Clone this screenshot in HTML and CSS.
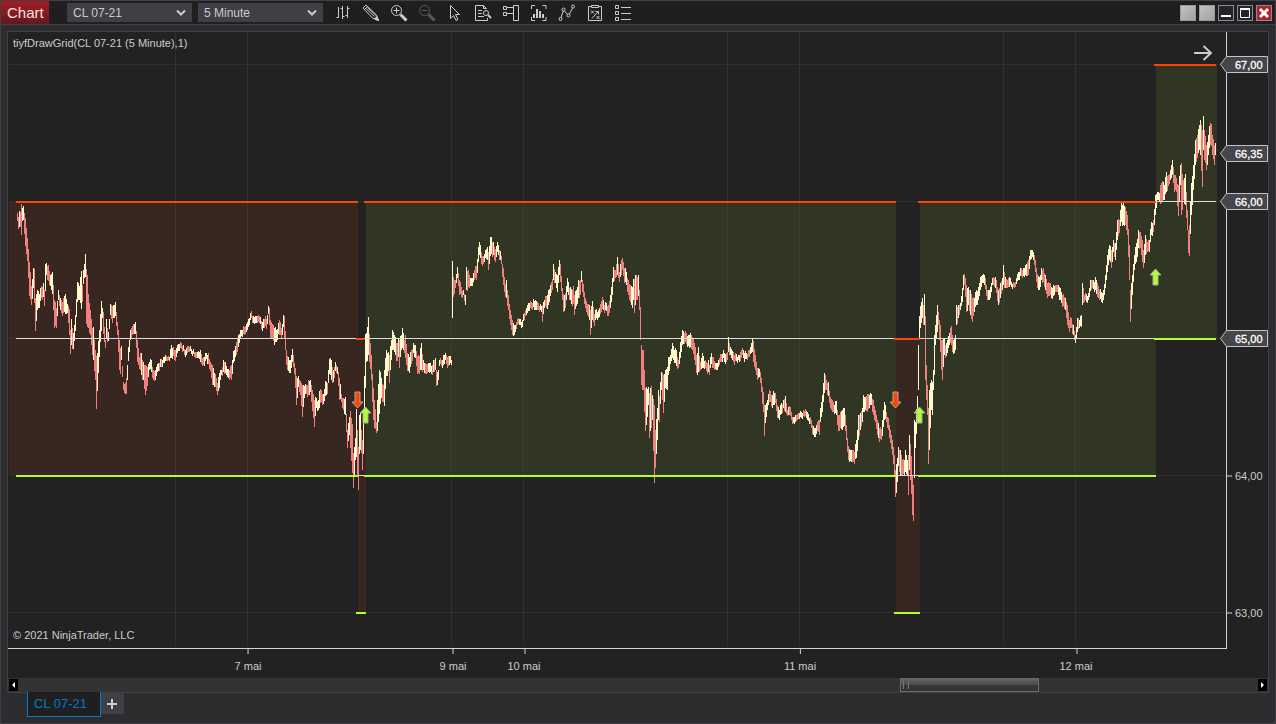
FILE: index.html
```html
<!DOCTYPE html>
<html lang="en">
<head>
    <meta charset="UTF-8">
    <meta name="viewport" content="width=device-width, initial-scale=1.0">
    <title>Chart - CL 07-21</title>
    <link rel="stylesheet" href="styles.css">
</head>
<body>
    <div class="window">
        <header class="titlebar">
            <h1 class="brand">Chart</h1>
            <div class="selectors">
                <div class="picker">
                    <select aria-label="Instrument"><option>CL 07-21</option></select>
                    <svg width="10" height="8" viewBox="0 0 10 8"><path d="M1 1.500l4 4 4-4"/></svg>
                </div>
                <div class="picker">
                    <select aria-label="Interval"><option>5 Minute</option></select>
                    <svg width="10" height="8" viewBox="0 0 10 8"><path d="M1 1.500l4 4 4-4"/></svg>
                </div>
            </div>
            <nav class="tools">
                <button aria-label="Bar style">
                    <svg viewBox="0 0 18 18"><path d="M4.500 3v11M2.500 13.500h2M8.500 2v13M6.500 4.500h2M8.500 12.500h2M13.500 2v12M11.500 11.500h2M13.500 4.500h2"/></svg>
                </button>
                <button aria-label="Drawing tools">
                    <svg viewBox="0 0 18 18"><path d="M1 4l3-3L14 10.500 16.500 16.500 10.500 14z"/><path d="M2.500 5.500l3-3"/><path d="M4 4.500l8.500 8M5.500 3.500l8.500 8"/><path class="solid" d="M12.500 15l4 1.500-1.500-4z"/></svg>
                </button>
                <button aria-label="Zoom in">
                    <svg viewBox="0 0 18 18"><circle cx="6.500" cy="6.500" r="5"/><path d="M3.500 6.500h6M6.500 3.500v6"/><path class="thick" d="M10.500 10.500l6 6"/></svg>
                </button>
                <button aria-label="Zoom out" disabled>
                    <svg viewBox="0 0 18 18"><circle cx="6.500" cy="6.500" r="5"/><path d="M3.500 6.500h6"/><path class="thick" d="M10.500 10.500l6 6"/></svg>
                </button>
                <button aria-label="Cursor">
                    <svg viewBox="0 0 18 18"><path d="M4.500 1.500v13l3-3 2.500 5 2-1-2.500-5h4z"/></svg>
                </button>
                <button aria-label="Data box">
                    <svg viewBox="0 0 18 18"><path d="M13.500 14v2.500h-12v-15h8l3 3M9.500 1.500v3h3M4 6.500h4M4 9.500h4M4 12.500h6"/><circle cx="12" cy="9" r="2.500"/><path class="wide" d="M14 11l3 3"/></svg>
                </button>
                <button aria-label="Chart trader">
                    <svg viewBox="0 0 18 18"><path d="M1.500 2.500h3v3h-3zM1.500 8.500h3v3h-3zM4.500 3.500h7M4.500 9.500h7M11.500 1.500h5v15h-5z"/></svg>
                </button>
                <button aria-label="Data series">
                    <svg viewBox="0 0 18 18"><path d="M1.500 5V1.500H5M12.500 1.500h3.500V5M1.500 13v3.500H5M12.500 16.500h3.500V13"/><path class="wide" d="M4 14v-4M7 14V5M10 14V7M13 14v-4"/></svg>
                </button>
                <button aria-label="Indicators">
                    <svg viewBox="0 0 18 18"><path d="M2.500 15l3-9 5 5.500 5-9"/><circle class="dot" cx="2.500" cy="15" r="1.500"/><circle class="dot" cx="5.500" cy="5.500" r="1.500"/><circle class="dot" cx="10.500" cy="11.500" r="1.500"/><circle class="dot" cx="15" cy="2.500" r="1.500"/></svg>
                </button>
                <button aria-label="Strategies">
                    <svg viewBox="0 0 18 18"><path d="M5.500 2.500h-3v14h13v-14h-3M5.500 1.500h7v2h-7zM5 6.500l3 3M8 6.500l-3 3M6 14.500l6-7M9.500 7.500h3v3M10.500 12l3 3M13.500 12l-3 3"/></svg>
                </button>
                <button aria-label="Properties">
                    <svg viewBox="0 0 18 18"><path d="M1.500 1.500h3v3h-3zM1.500 7.500h3v3h-3zM1.500 13.500h3v3h-3zM7 3.500h10M7 9.500h10M7 15.500h10"/></svg>
                </button>
            </nav>
            <div class="window-buttons">
                <button class="blank" aria-label="Instrument link"></button>
                <button class="blank" aria-label="Interval link"></button>
                <button aria-label="Minimize"><svg viewBox="0 0 14 14"><path class="bar" d="M2 10h10"/></svg></button>
                <button aria-label="Maximize"><svg viewBox="0 0 14 14"><path d="M2.500 3v8.500h9V3"/><path class="bar" d="M2 3h10"/></svg></button>
                <button class="close" aria-label="Close"><svg viewBox="0 0 14 14"><path class="cross" d="M3 3l8 8M11 3l-8 8"/></svg></button>
            </div>
        </header>

        <main class="workspace">
            <section class="panel">
                <div class="chart">
                    <div class="plot">
                        <svg class="canvas" id="canvas" viewBox="8 32 1218 616" preserveAspectRatio="none"></svg>
                        <p class="caption">tiyfDrawGrid(CL 07-21 (5 Minute),1)</p>
                        <p class="copyright">© 2021 NinjaTrader, LLC</p>
                        <button class="go-latest" aria-label="Go to latest bar">
                            <svg width="20" height="18" viewBox="0 0 20 18"><path d="M1 9h17M10.500 2l7.500 7-7.500 7"/></svg>
                        </button>
                    </div>
                    <div class="price-axis" id="priceAxis"></div>
                    <div class="time-axis" id="timeAxis"></div>
                </div>
                <div class="scrollbar">
                    <button aria-label="Scroll left"><svg width="5" height="6" viewBox="0 0 5 6"><path d="M4 0v6L1 3z"/></svg></button>
                    <div class="track"><div class="thumb"></div></div>
                    <button aria-label="Scroll right"><svg width="5" height="6" viewBox="0 0 5 6"><path d="M1 0v6l3-3z"/></svg></button>
                </div>
            </section>
        </main>

        <footer class="tabs">
            <button class="tab">CL 07-21</button>
            <button class="add-tab" aria-label="Add tab"><svg width="10" height="10" viewBox="0 0 10 10"><path d="M0 5h10M5 0v10"/></svg></button>
        </footer>
    </div>
    <script src="chart.js"></script>
</body>
</html>
```
FILE: styles.css
```css
* {
    margin: 0;
    padding: 0;
    box-sizing: border-box;
    font-family: "Liberation Sans", Arial, sans-serif;
}

body {
    background: #2d2d30;
    color: #cccccc;
    font-size: 11px;
}

button {
    border: none;
    background: none;
    color: inherit;
    cursor: pointer;
}

svg {
    display: block;
    fill: none;
    stroke: currentColor;
}

.window {
    display: flex;
    flex-direction: column;
    height: 100vh;
    border: 1px solid #3f3f46;
}

/* Title bar */
.titlebar {
    display: flex;
    align-items: center;
    height: 24px;
    background: #1f1f1f;
    border-bottom: 1px solid #3f3f46;
}

.brand {
    width: 48px;
    height: 23px;
    padding-left: 6px;
    background: linear-gradient(#a51e25, #64181c);
    color: #f0e4e4;
    font-size: 15px;
    font-weight: normal;
    line-height: 23px;
}

.selectors {
    display: flex;
    gap: 6px;
    margin-left: 18px;
}

.picker {
    position: relative;
    width: 125px;
}

.picker select {
    appearance: none;
    display: block;
    width: 100%;
    height: 19px;
    padding-left: 6px;
    background: #3f3f46;
    border: none;
    color: #cccccc;
    font-size: 12px;
}

.picker svg {
    position: absolute;
    top: 6px;
    right: 6px;
    stroke-width: 2;
    pointer-events: none;
}

.tools {
    display: flex;
    margin-left: 6px;
}

.tools button {
    display: flex;
    align-items: center;
    justify-content: center;
    width: 28px;
    height: 23px;
}

.tools button:disabled {
    color: #5a5a5a;
}

.tools svg {
    width: 18px;
    height: 18px;
}

.tools .thick {
    stroke-width: 3;
}

.tools .wide {
    stroke-width: 2;
}

.tools .solid {
    fill: currentColor;
}

.tools .dot {
    fill: #1f1f1f;
}

.window-buttons {
    display: flex;
    gap: 3px;
    margin-left: auto;
    margin-right: 3px;
}

.window-buttons button {
    width: 16px;
    height: 16px;
    border: 1px solid #8c8c8c;
    background: #26232a;
    color: #ffffff;
}

.window-buttons .blank {
    background: linear-gradient(135deg, #c4c0c2, #a5a1a3);
    border-color: #9a9a9a;
}

.window-buttons .close {
    background: #b3202c;
}

.window-buttons .bar {
    stroke-width: 2;
}

.window-buttons .cross {
    stroke-width: 3;
}

/* Chart panel */
.workspace {
    display: flex;
    flex: 1;
    min-height: 0;
    padding: 6px 6px 0;
}

.panel {
    display: flex;
    flex: 1;
    flex-direction: column;
    min-width: 0;
    background: #222222;
    border: 1px solid #3f3f46;
}

.chart {
    display: grid;
    flex: 1;
    grid-template-columns: minmax(0, 1fr) 41px;
    grid-template-rows: minmax(0, 1fr) 29px;
    min-height: 0;
}

.plot {
    position: relative;
    border-right: 1px solid #d3d3d3;
    border-bottom: 1px solid #d3d3d3;
}

.canvas {
    width: 100%;
    height: 100%;
    stroke: none;
    shape-rendering: crispEdges;
}

.caption {
    position: absolute;
    top: 5px;
    left: 5px;
}

.copyright {
    position: absolute;
    bottom: 7px;
    left: 5px;
}

.go-latest {
    position: absolute;
    top: 12px;
    right: 13px;
}

.go-latest svg {
    stroke-width: 2;
}

.zone-down {
    fill: #382620;
}

.zone-up {
    fill: #303623;
}

.grid-line {
    fill: rgba(255, 255, 255, 0.06);
}

.level-top {
    fill: #ff4500;
}

.level-bottom {
    fill: #adff2f;
}

.level-mid {
    fill: #dcdcdc;
}

.bar-up {
    fill: #fffacd;
}

.bar-down {
    fill: #f08080;
}

.arrow {
    stroke: #a9a9a9;
    shape-rendering: auto;
}

/* Axes */
.price-axis,
.time-axis {
    position: relative;
}

.price-label {
    position: absolute;
    left: 0;
    padding-left: 8px;
    line-height: 17px;
    transform: translateY(-50%);
}

.price-label::before {
    content: "";
    position: absolute;
    top: 8px;
    left: 0;
    width: 5px;
    height: 1px;
    background: #d3d3d3;
}

.price-tag {
    position: absolute;
    left: -7px;
    width: 48px;
    height: 18px;
    transform: translateY(-50%);
}

.price-tag svg {
    fill: #45454b;
    stroke: #c4c4c4;
}

.price-tag span {
    position: absolute;
    top: 2px;
    left: 15px;
    color: #ffffff;
    line-height: 14px;
    -webkit-text-stroke: 0.3px #ffffff;
}

.time-label {
    position: absolute;
    top: 0;
    padding-top: 11px;
    white-space: nowrap;
    transform: translateX(-50%);
}

.time-label::before {
    content: "";
    position: absolute;
    top: 0;
    left: 50%;
    width: 1px;
    height: 5px;
    background: #d3d3d3;
}

/* Scrollbar */
.scrollbar {
    display: flex;
    align-items: center;
    height: 14px;
    padding: 0 1px;
    background: #333333;
}

.scrollbar button {
    display: flex;
    align-items: center;
    justify-content: center;
    width: 9px;
    height: 12px;
    background: #000000;
}

.scrollbar svg {
    fill: #ffffff;
    stroke: none;
}

.track {
    flex: 1;
    height: 14px;
}

.thumb {
    width: 11.2%;
    height: 14px;
    margin-left: 71.1%;
    border: 1px solid #6a6a6a;
    background: linear-gradient(#646464, #4a4a4a 50%, #383838 50%, #333333);
}

.thumb::before {
    content: "";
    display: block;
    width: 4px;
    height: 8px;
    margin: 2px;
    border: solid #777777;
    border-width: 0 1px;
}

/* Workspace tabs */
.tabs {
    display: flex;
    align-items: flex-start;
    height: 30px;
    padding-left: 26px;
}

.tab {
    height: 25px;
    width: 74px;
    margin-top: -1px;
    padding: 0 7px 2px 0;
    background: #1f1f1f;
    border: 1px solid #007acc;
    border-top: none;
    color: #007acc;
    font-size: 13px;
}

.add-tab {
    display: flex;
    align-items: center;
    justify-content: center;
    width: 23px;
    height: 21px;
    padding-right: 1px;
    background: #3f3f46;
}

.add-tab svg {
    stroke-width: 2;
}
```
FILE: chart.js
```js
const svg = document.getElementById('canvas');

// Plot area, in canvas units
const plot = { left: 8, top: 32, width: 1218, height: 616 };

// x, high, low of the price bars; the bars between two entries are interpolated
const bars = [
    17,213,221, 18,217,229, 19,211,227, 20,212,227, 21,204,235, 22,208,221, 23,206,220, 25,218,246, 27,238,261, 29,262,296, 31,286,305, 33,268,288,
    34,269,303, 35,298,331, 37,290,310, 39,294,308, 41,286,298, 43,283,297, 44,290,306, 45,264,291, 46,263,275, 48,265,281, 50,275,286,
    52,272,294, 54,300,328, 56,308,328, 58,290,300, 60,298,310, 62,302,316, 64,296,312, 65,294,314, 67,304,313, 69,309,335,
    70,330,354, 71,319,345, 73,333,349, 75,315,331, 77,282,302, 79,286,300, 81,271,309, 82,285,302, 83,270,284, 84,264,278, 85,254,277,
    86,269,324, 87,275,327, 88,294,328, 90,310,335, 92,328,355, 93,327,360, 95,350,380, 96,356,409, 97,353,391, 99,330,357, 101,301,331,
    102,308,318, 103,312,334, 105,340,348, 106,319,338, 108,332,341, 110,304,315, 112,306,323, 113,305,318, 115,302,316, 117,322,335,
    119,340,370, 120,348,374, 121,346,360, 123,382,390, 125,383,394, 126,378,394, 128,347,361, 130,330,340, 132,326,335, 134,324,334,
    135,322,334, 137,340,362, 139,357,369, 141,353,375, 143,362,380, 145,365,395, 147,367,386, 149,362,370, 151,360,372, 153,370,380,
    155,370,380, 157,364,372, 159,363,371, 161,359,367, 163,357,363, 165,355,361, 167,357,361, 169,357,361, 171,345,358, 173,347,356,
    175,350,361, 177,345,353, 179,344,351, 181,343,349, 183,345,351, 185,350,357, 187,346,353, 189,347,352, 191,349,354, 193,349,354,
    195,352,358, 197,352,358, 199,352,359, 200,350,362, 202,358,366, 204,357,366, 206,353,359, 208,353,364, 210,362,371, 212,365,385,
    214,373,387, 216,378,391, 217,383,395, 219,373,388, 221,370,375, 223,360,372, 225,362,373, 227,369,377, 229,370,380, 231,365,380,
    233,351,363, 235,346,357, 237,338,352, 239,334,343, 241,330,336, 243,326,334, 245,326,334, 247,322,330, 249,318,325, 251,311,318,
    253,316,323, 255,316,323, 257,316,323, 259,316,323, 261,321,329, 263,319,328, 265,316,326, 266,319,329, 268,306,314, 269,308,325,
    270,320,338, 272,324,338, 274,328,345, 276,330,342, 278,323,334, 279,320,335, 281,328,338, 283,315,327, 284,316,338, 286,350,365,
    288,357,371, 290,360,373, 292,349,362, 294,363,374, 296,376,405, 298,376,387, 300,381,395, 302,385,417, 304,386,398, 306,385,394,
    308,380,395, 310,380,392, 312,390,411, 314,400,427, 316,398,408, 318,400,410, 319,391,408, 321,390,402, 323,394,404, 325,381,396,
    327,383,394, 329,359,374, 331,360,380, 333,370,382, 335,362,371, 337,367,374, 339,378,400, 341,394,402, 343,398,410, 345,397,415,
    347,430,448, 349,417,435, 350,411,448, 352,424,473, 353,453,488, 355,438,460, 356,409,457, 357,430,475, 358,447,490, 359,415,454,
    360,413,450, 361,430,453, 362,440,470, 363,415,454, 364,376,420, 365,334,388, 366,333,362, 368,317,355, 369,334,362, 371,355,380,
    373,388,420, 374,400,428, 376,422,433, 377,400,431, 379,370,414, 381,378,398, 383,385,402, 384,370,406, 386,350,376, 388,352,371,
    389,355,383, 391,340,360, 392,330,350, 394,335,352, 396,343,361, 398,338,357, 399,340,368, 401,335,350, 402,328,348, 404,340,353,
    405,335,358, 407,353,371, 409,357,373, 411,350,364, 413,343,353, 415,345,358, 417,356,374, 419,356,374, 421,343,370, 423,360,370,
    425,363,374, 427,364,373, 429,363,373, 431,366,374, 433,360,372, 435,358,370, 436,370,386, 438,370,380, 439,360,366, 441,360,366,
    443,355,365, 445,353,360, 447,357,368, 449,356,365, 451,360,365, 452,261,318, 453,277,297, 455,280,288, 457,267,278, 459,280,295,
    461,287,297, 463,290,295, 465,295,305, 466,267,290, 468,270,287, 470,278,286, 472,278,286, 474,270,280, 476,266,280, 478,247,262,
    479,242,255, 481,252,264, 483,256,264, 485,250,258, 487,247,260, 488,252,270, 490,237,256, 491,237,254, 493,242,255, 495,249,262,
    497,242,252, 499,250,260, 501,256,264, 503,268,285, 505,284,297, 506,280,298, 508,295,310, 510,310,325, 512,320,335, 513,323,336,
    515,325,332, 517,319,325, 519,319,325, 521,322,328, 523,314,321, 525,310,316, 527,305,313, 529,303,311, 531,302,309, 533,299,307,
    535,300,310, 537,302,310, 539,306,312, 541,306,312, 542,305,322, 544,300,308, 546,296,308, 548,290,305, 550,285,296, 552,279,290,
    553,264,280, 555,272,283, 557,275,292, 559,260,275, 560,264,282, 562,288,300, 563,294,312, 565,293,308, 567,278,292, 569,288,300,
    571,289,304, 573,286,304, 574,295,315, 576,290,306, 578,280,298, 580,280,295, 581,271,282, 583,284,297, 585,298,308, 587,304,315,
    589,305,320, 590,310,335, 592,301,320, 594,314,326, 596,309,318, 598,310,318, 600,304,314, 602,297,309, 604,305,313, 606,303,311,
    608,305,316, 610,295,308, 612,278,295, 613,267,282, 615,270,278, 617,257,275, 619,272,282, 621,260,275, 622,258,270, 624,268,283,
    626,272,285, 628,280,295, 630,285,302, 632,287,308, 633,279,300, 634,279,313, 636,275,300, 638,275,296, 639,290,310, 640,307,340,
    641,345,385, 643,350,390, 645,388,431, 646,387,425, 648,387,405, 649,393,438, 651,386,428, 652,395,420, 654,405,483, 655,430,468,
    657,408,440, 658,390,420, 659,396,422, 661,372,390, 662,373,400, 663,375,413, 665,370,388, 667,367,390, 668,357,375, 670,355,364,
    672,343,358, 674,350,363, 676,350,366, 678,360,368, 680,342,358, 682,330,345, 684,333,344, 686,333,344, 688,335,346, 690,333,347,
    692,337,350, 694,343,360, 696,355,373, 698,347,372, 700,362,370, 702,353,368, 704,361,369, 706,362,371, 708,360,372, 709,365,375,
    711,353,364, 713,357,368, 715,363,369, 717,363,370, 719,358,365, 721,354,362, 723,350,358, 725,354,364, 727,352,360, 728,337,352,
    730,347,355, 732,351,360, 734,355,365, 736,354,361, 738,355,360, 740,352,361, 742,348,355, 744,353,362, 746,353,359, 748,350,357,
    750,347,354, 752,339,352, 753,341,362, 755,355,370, 757,368,380, 759,369,377, 761,378,392, 763,392,412, 764,405,436, 765,405,423,
    767,400,410, 769,390,402, 771,395,406, 773,391,405, 775,393,403, 777,405,418, 779,410,420, 781,403,414, 783,400,408, 785,396,412,
    787,410,416, 789,406,415, 791,412,420, 793,417,423, 795,415,422, 797,414,420, 799,413,419, 801,412,418, 803,410,416, 805,409,416,
    807,412,420, 809,418,424, 811,420,428, 813,426,435, 815,428,437, 817,422,431, 819,420,435, 820,408,422, 822,395,412, 824,373,393,
    826,380,390, 828,382,396, 830,397,408, 832,400,412, 834,405,414, 836,401,415, 838,415,431, 840,412,428, 842,410,430, 844,408,426,
    846,425,440, 848,446,460, 850,450,461, 852,450,462, 854,452,464, 856,440,458, 858,415,440, 860,413,430, 862,408,422, 863,395,412,
    865,397,410, 867,394,412, 869,395,408, 871,394,405, 873,400,415, 875,410,422, 877,420,435, 879,428,442, 881,429,440, 882,420,436,
    884,402,420, 886,412,422, 888,418,430, 890,430,443, 892,440,455, 894,455,475, 895,470,497, 896,464,493, 898,447,466, 900,450,475,
    902,460,475, 904,460,475, 905,450,472, 907,460,475, 908,455,495, 909,435,470, 911,456,494, 912,475,515, 913,485,521, 914,420,478,
    915,422,448, 917,396,420, 918,345,390, 919,316,340, 920,306,328, 922,298,318, 923,305,325, 924,294,325, 925,316,380, 926,365,400,
    927,385,415, 928,408,464, 929,390,450, 931,380,410, 932,382,415, 933,370,390, 934,335,375, 935,325,345, 937,305,332, 938,312,325,
    940,325,352, 941,340,370, 942,340,380, 944,338,355, 945,345,358, 947,340,353, 949,333,345, 951,326,345, 953,340,354, 955,335,350,
    956,305,325, 958,305,318, 960,303,310, 962,288,302, 963,275,290, 964,274,285, 966,285,312, 968,287,305, 970,290,315, 972,298,322,
    974,298,312, 976,290,305, 978,287,300, 980,277,290, 982,275,283, 984,275,285, 986,285,296, 988,290,300, 990,287,298, 992,278,285,
    994,278,287, 996,280,293, 998,290,305, 1000,283,298, 1002,278,290, 1003,265,285, 1005,277,288, 1007,280,288, 1009,277,287,
    1011,282,287, 1013,282,287, 1015,282,287, 1017,274,281, 1019,272,280, 1021,268,276, 1023,268,276, 1025,265,275, 1027,262,276,
    1028,260,275, 1030,250,260, 1032,250,257, 1034,255,265, 1036,268,282, 1038,276,290, 1040,275,287, 1041,268,280, 1043,268,282,
    1045,275,290, 1047,283,298, 1049,283,296, 1051,287,298, 1053,285,296, 1055,285,292, 1057,285,292, 1059,287,300, 1061,292,303,
    1063,294,306, 1065,298,310, 1067,305,325, 1069,320,332, 1071,318,328, 1073,325,335, 1075,335,343, 1077,318,332, 1079,320,328,
    1081,315,327, 1082,283,305, 1084,295,302, 1086,294,302, 1088,293,300, 1090,280,291, 1092,280,288, 1094,282,292, 1095,277,290,
    1097,283,297, 1099,290,300, 1101,292,302, 1103,290,300, 1105,275,288, 1107,255,272, 1109,245,260, 1111,250,268, 1113,240,252,
    1115,243,260, 1117,220,240, 1119,220,233, 1121,203,222, 1123,203,225, 1125,207,225, 1127,215,235, 1129,245,280, 1130,290,322,
    1132,275,295, 1134,255,270, 1136,243,262, 1138,230,248, 1140,232,248, 1142,240,262, 1143,250,268, 1145,235,255, 1147,242,252,
    1149,240,252, 1151,222,235, 1153,220,232, 1155,195,215, 1157,192,200, 1159,193,202, 1160,185,204, 1162,181,202, 1164,185,200,
    1166,172,192, 1168,175,186, 1170,170,180, 1172,160,175, 1174,175,192, 1176,178,192, 1178,185,216, 1180,165,185, 1181,163,215,
    1183,180,200, 1185,174,205, 1187,210,230, 1188,230,253, 1189,225,256, 1191,183,215, 1193,165,190, 1195,140,165, 1197,135,158,
    1199,125,150, 1200,120,155, 1202,130,187, 1203,116,150, 1204,130,160, 1206,145,170, 1208,135,155, 1209,126,148, 1211,124,146,
    1212,135,155, 1214,145,165, 1215,143,155
];

function add(tag, attrs) {
    const el = document.createElementNS('http://www.w3.org/2000/svg', tag);
    for (const key in attrs) {
        el.setAttribute(key, attrs[key]);
    }
    svg.appendChild(el);
}

function rect(name, x1, y1, x2, y2) {
    add('rect', { class: name, x: x1, y: y1, width: x2 - x1, height: y2 - y1 });
}

function priceY(price) {
    return 338 + Math.round((65 - price) * 137);
}

// Zones
rect('zone-down', 9, 202, 358, 475);
rect('zone-down', 358, 339, 366, 612);
rect('zone-up', 366, 202, 896, 475);
rect('zone-down', 896, 339, 920, 612);
rect('zone-up', 920, 202, 1156, 475);
rect('zone-up', 1156, 65, 1217, 338);

// Grid
[175, 247, 451, 523, 727, 799, 1003, 1075].forEach(x => rect('grid-line', x, 32, x + 1, 646));
[67, 66, 65, 64, 63].forEach(p => rect('grid-line', 9, priceY(p), 1225, priceY(p) + 1));

// Price bars, all bars of one colour share a path
const paths = { 'bar-up': '', 'bar-down': '' };
let last = 0;
for (let i = 0; i < bars.length; i += 3) {
    const [x, high, low] = bars.slice(i, i + 3);
    const next = i + 3 < bars.length ? bars[i + 3] : x + 1;
    for (let n = x; n < next; n++) {
        const t = (n - x) / (next - x);
        const wobble = n === x ? 0 : (n * 7) % 5 - 2;
        const top = Math.round(high + t * ((bars[i + 4] || high) - high)) + wobble;
        const bottom = Math.round(low + t * ((bars[i + 5] || low) - low)) + wobble;
        const move = (top + bottom) / 2 - last;
        const falling = Math.abs(move) < 4 ? (n * 13) % 7 < 3 : move > 0;
        paths[falling ? 'bar-down' : 'bar-up'] += `M${n} ${top}h1V${bottom}h-1z`;
        last = (top + bottom) / 2;
    }
}
for (const name in paths) {
    add('path', { class: name, d: paths[name] });
}

// Levels
[[16, 1154, 65], [358, 364, 64], [896, 918, 64], [1156, 1216, 66]]
    .forEach(([x1, x2, p]) => rect('level-mid', x1, priceY(p), x2, priceY(p) + 1));
[[16, 358, 66], [364, 896, 66], [918, 1156, 66], [1154, 1216, 67], [356, 364, 65], [894, 920, 65]]
    .forEach(([x1, x2, p]) => rect('level-top', x1, priceY(p), x2, priceY(p) + 2));
[[16, 358, 64], [364, 896, 64], [918, 1156, 64], [356, 366, 63], [894, 920, 63], [1154, 1216, 65]]
    .forEach(([x1, x2, p]) => rect('level-bottom', x1, priceY(p), x2, priceY(p) + 2));

// Signals
[[357, 408], [895, 408]].forEach(([x, y]) =>
    add('path', { class: 'arrow level-top', d: `M${x - 2} ${y - 16}h5v10h3l-5.500 6-5.500-6h3z` }));
[[365, 407], [919, 407], [1155, 269]].forEach(([x, y]) =>
    add('path', { class: 'arrow level-bottom', d: `M${x - 2} ${y + 16}h5v-10h3l-5.500-6-5.500 6h3z` }));

// Axis labels
const priceAxis = document.getElementById('priceAxis');
function addPrice(price, tagged) {
    const el = document.createElement('div');
    const text = price.toFixed(2).replace('.', ',');
    el.className = tagged ? 'price-tag' : 'price-label';
    el.style.top = (priceY(price) + 0.5 - plot.top) / (plot.height + 1) * 100 + '%';
    el.innerHTML = tagged
        ? `<svg width="48" height="17" viewBox="0 0 48 17"><path d="M.5 8.500l6-8h41v16h-41z"/></svg><span>${text}</span>`
        : text;
    priceAxis.appendChild(el);
}
[67, 66.35, 66, 65].forEach(p => addPrice(p, true));
[64, 63].forEach(p => addPrice(p, false));

const timeAxis = document.getElementById('timeAxis');
[[247, '7 mai'], [452, '9 mai'], [523, '10 mai'], [799, '11 mai'], [1075, '12 mai']].forEach(([x, text]) => {
    const el = document.createElement('div');
    el.className = 'time-label';
    el.style.left = (x + 1 - plot.left) / (plot.width + 1) * 100 + '%';
    el.textContent = text;
    timeAxis.appendChild(el);
});
```
